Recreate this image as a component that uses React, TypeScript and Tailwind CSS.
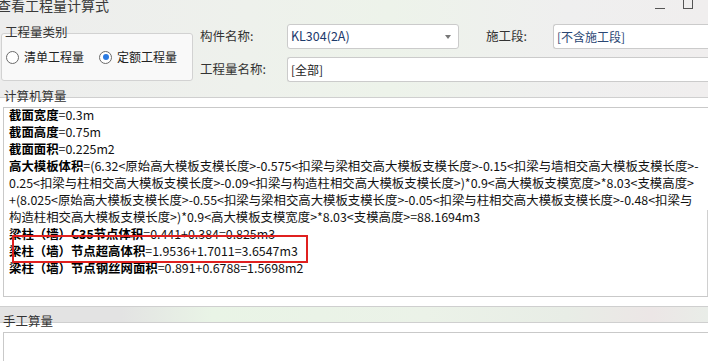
import React from "react";

const font = { fontFamily: '"Noto Sans CJK SC", "Noto Sans", sans-serif' };

type Line = { b?: string; t: string };

const lines: Line[] = [
  { b: "截面宽度", t: "=0.3m" },
  { b: "截面高度", t: "=0.75m" },
  { b: "截面面积", t: "=0.225m2" },
  {
    b: "高大模板体积",
    t: "=(6.32<原始高大模板支模长度>-0.575<扣梁与梁相交高大模板支模长度>-0.15<扣梁与墙相交高大模板支模长度>-",
  },
  { t: "0.25<扣梁与柱相交高大模板支模长度>-0.09<扣梁与构造柱相交高大模板支模长度>)*0.9<高大模板支模宽度>*8.03<支模高度>" },
  { t: "+(8.025<原始高大模板支模长度>-0.55<扣梁与梁相交高大模板支模长度>-0.05<扣梁与柱相交高大模板支模长度>-0.48<扣梁与" },
  { t: "构造柱相交高大模板支模长度>)*0.9<高大模板支模宽度>*8.03<支模高度>=88.1694m3" },
  { b: "梁柱（墙）C35节点体积", t: "=0.441+0.384=0.825m3" },
  { b: "梁柱（墙）节点超高体积", t: "=1.9536+1.7011=3.6547m3" },
  { b: "梁柱（墙）节点钢丝网面积", t: "=0.891+0.6788=1.5698m2" },
];

function Radio({ checked, label }: { checked?: boolean; label: string }) {
  return (
    <div className="flex items-center gap-[5px]">
      <span className="w-[13px] h-[13px] rounded-full border border-[#6b6b6b] bg-white flex items-center justify-center">
        {checked && <span className="w-[6px] h-[6px] rounded-full bg-[#2a7ae2]" />}
      </span>
      <span className="text-[12px] text-[#222]">{label}</span>
    </div>
  );
}

export default function App() {
  return (
    <div
      style={font}
      className="relative w-[708px] h-[361px] overflow-hidden bg-[linear-gradient(90deg,#ededed_0%,#eef1ec_35%,#edf3ea_55%,#efefef_80%,#f0eeee_100%)] text-[#222]"
    >
      {/* top area */}
      <div className="h-[97px]">
        <div className="flex justify-between h-[22px]">
          <span className="text-[14px] leading-[14px] text-[#3a3a3a] -mt-[2px] -ml-[3px]">查看工程量计算式</span>
          <div className="flex items-start gap-[18px] mr-[15px]">
            <span className="w-[10px] h-px bg-[#555] mt-[8px]" />
            <span className="w-[10px] h-[10px] border border-[#555] -mt-px" />
          </div>
        </div>
        <div className="flex">
          <div className="relative ml-px mt-[11px] w-[192px] h-[48px] rounded-[3px] border border-[#d2d2d2] bg-[#f9f9f9] flex items-center pl-[4px] gap-[15px]">
            <span className="absolute left-[3px] -top-[9px] text-[12.5px] leading-[14px] text-[#333]">工程量类别</span>
            <Radio label="清单工程量" />
            <Radio checked label="定额工程量" />
          </div>
          <div className="ml-[7px] flex-1">
            <div className="flex items-center h-[25px] mt-[2px]">
              <span className="w-[87px] text-[12.5px] text-[#333]">构件名称:</span>
              <div className="w-[172px] h-[25px] rounded-[3px] border border-[#cbcbcb] bg-white flex items-center justify-between pl-[3px] pr-[7px]">
                <span className="text-[12.5px] text-[#1d3a6b]">KL304(2A)</span>
                <span className="w-0 h-0 border-l-[3px] border-r-[3px] border-t-[4px] border-l-transparent border-r-transparent border-t-[#777]" />
              </div>
              <span className="ml-[27px] w-[67px] text-[12.5px] text-[#333]">施工段:</span>
              <div className="flex-1 h-[25px] rounded-l-[3px] border border-r-0 border-[#cbcbcb] bg-white flex items-center pl-[3px]">
                <span className="text-[12px] text-[#2a4774]">[不含施工段]</span>
              </div>
            </div>
            <div className="flex items-center h-[25px] mt-[8px]">
              <span className="w-[87px] text-[12.5px] text-[#333]">工程量名称:</span>
              <div className="flex-1 h-[25px] rounded-l-[3px] border border-r-0 border-[#cbcbcb] bg-white flex items-center pl-[3px]">
                <span className="text-[12px] text-[#222]">[全部]</span>
              </div>
            </div>
          </div>
        </div>
      </div>

      {/* 计算机算量 */}
      <div className="relative h-[210px] bg-white border-y border-[#cfcfcf]">
        <span className="absolute left-[4px] -top-[9px] text-[12.5px] leading-[14px] text-[#333]">计算机算量</span>
        <div className="relative ml-[3px] mt-[9px] h-[190px] border border-r-0 border-[#c9c9c9] overflow-hidden">
          <div className="pl-[5px] -mt-px text-[12.4px] leading-[17px] text-[#111]">
            {lines.map((l, i) => (
              <div key={i} className="whitespace-nowrap">
                {l.b && <span className="font-bold text-black">{l.b}</span>}
                {l.t}
              </div>
            ))}
          </div>
          <span className="absolute right-0 top-[102px] bottom-0 w-px bg-[#d0d0d0]" />
        </div>
        <div className="absolute left-[12px] top-[137px] w-[296px] h-[28px] border-2 border-[#e0201f]" />
      </div>

      {/* band */}
      <div className="h-[15px] bg-[linear-gradient(90deg,#e3e3e3_0%,#e3e3e3_17%,#e9f4e6_30%,#ebf2e8_60%,#e8ede6_80%,#ece6e6_92%,#e9ede8_100%)]" />

      {/* 手工算量 */}
      <div className="relative h-[40px] bg-white border-t border-[#cfcfcf]">
        <span className="absolute left-[3px] -top-[9px] text-[12.5px] leading-[14px] text-[#333]">手工算量</span>
        <div className="ml-[3px] mt-[9px] h-[40px] border-l border-t border-[#c9c9c9]" />
      </div>
    </div>
  );
}
